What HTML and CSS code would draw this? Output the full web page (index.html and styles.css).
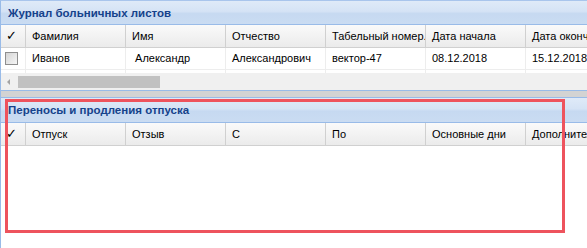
FILE: index.html
```html
<!DOCTYPE html>
<html lang="ru">
<head>
    <meta charset="UTF-8">
    <title>Журнал больничных листов</title>
    <link rel="stylesheet" href="styles.css">
</head>
<body>
    <!-- Sick leave journal -->
    <div class="panel panel-top">
        <div class="panel-header">Журнал больничных листов</div>
        <div class="grid-head">
            <div class="cell check-col">&#10003;</div>
            <div class="cell">Фамилия</div>
            <div class="cell">Имя</div>
            <div class="cell">Отчество</div>
            <div class="cell">Табельный номер.</div>
            <div class="cell">Дата начала</div>
            <div class="cell">Дата окончания</div>
        </div>
        <div class="grid-row">
            <div class="cell check-col"><span class="checkbox"></span></div>
            <div class="cell">Иванов</div>
            <div class="cell">&nbsp;Александр</div>
            <div class="cell">Александрович</div>
            <div class="cell">вектор-47</div>
            <div class="cell">08.12.2018</div>
            <div class="cell">15.12.2018</div>
        </div>
        <div class="grid-row partial">
            <div class="cell check-col"><span class="checkbox"></span></div>
            <div class="cell"></div>
            <div class="cell"></div>
            <div class="cell"></div>
            <div class="cell"></div>
            <div class="cell"></div>
            <div class="cell"></div>
        </div>
        <div class="hscroll">
            <span class="arrow"></span>
            <span class="thumb"></span>
        </div>
    </div>

    <div class="splitter"></div>

    <!-- Vacation transfers -->
    <div class="panel panel-bottom">
        <div class="panel-header">Переносы и продления отпуска</div>
        <div class="grid-head">
            <div class="cell check-col">&#10003;</div>
            <div class="cell">Отпуск</div>
            <div class="cell">Отзыв</div>
            <div class="cell">С</div>
            <div class="cell">По</div>
            <div class="cell">Основные дни</div>
            <div class="cell">Дополнительные дни</div>
        </div>
        <div class="highlight"></div>
    </div>
</body>
</html>
```

FILE: styles.css
```css
body {
    margin: 0;
    width: 587px;
    height: 248px;
    overflow: hidden;
    font-family: "Liberation Sans", Arial, sans-serif;
    font-size: 11px;
    background-color: #fff;
}

.panel {
    border-left: 1px solid #99bbe8;
    background-color: #fff;
}

.panel-top {
    border-top: 1px solid #a9c5ec;
    border-bottom: 1px solid #99bbe8;
}

.panel-bottom {
    position: relative;
    border-top: 1px solid #99bbe8;
    height: 150px;
}

.panel-header {
    height: 23px;
    line-height: 24px;
    padding-left: 7px;
    font-size: 11.5px;
    font-weight: bold;
    color: #15428b;
    background: linear-gradient(#dfeaf8 0%, #d5e3f5 45%, #c6d9f1 55%, #cadcf2 100%);
    border-bottom: 1px solid #99bbe8;
}

.panel-bottom .panel-header {
    height: 24px;
    line-height: 25px;
}

.grid-head,
.grid-row {
    display: flex;
    white-space: nowrap;
}

.grid-head {
    height: 22px;
    background: linear-gradient(#fafafa, #ebebeb);
    border-bottom: 1px solid #d0d0d0;
}

.grid-row {
    height: 21px;
    border-bottom: 1px solid #ededed;
}

.grid-row.partial {
    height: 3px;
    overflow: hidden;
    border-bottom: none;
}

.cell {
    flex: 0 0 100px;
    width: 100px;
    box-sizing: border-box;
    padding-left: 6px;
    border-right: 1px solid #d0d0d0;
    overflow: hidden;
    font-size: 11px;
    line-height: 22px;
    color: #000;
}

.grid-row .cell {
    border-right-color: #ededed;
    line-height: 21px;
}

.check-col {
    flex-basis: 25px;
    width: 25px;
    padding-left: 5px;
    font-size: 13px;
}

.checkbox {
    display: inline-block;
    width: 11px;
    height: 11px;
    margin-top: 4px;
    margin-left: -1px;
    border: 1px solid #8e8e8e;
    background: linear-gradient(135deg, #d4d4d4, #f6f6f6);
    vertical-align: top;
}

.hscroll {
    display: flex;
    align-items: center;
    height: 17px;
    background-color: #f0f0f0;
}

.arrow {
    width: 0;
    height: 0;
    margin: 0 6px 0 6px;
    border-top: 3px solid transparent;
    border-bottom: 3px solid transparent;
    border-right: 3px solid #a3a3a3;
}

.thumb {
    width: 142px;
    height: 12px;
    margin-left: 2px;
    background-color: #c1c1c1;
}

.splitter {
    height: 6px;
    background-color: #d3d3d3;
    border-left: 1px solid #99bbe8;
}

.highlight {
    position: absolute;
    left: 4px;
    top: 1px;
    width: 560px;
    height: 134px;
    border: 3px solid #ee535d;
    box-sizing: border-box;
}
```
